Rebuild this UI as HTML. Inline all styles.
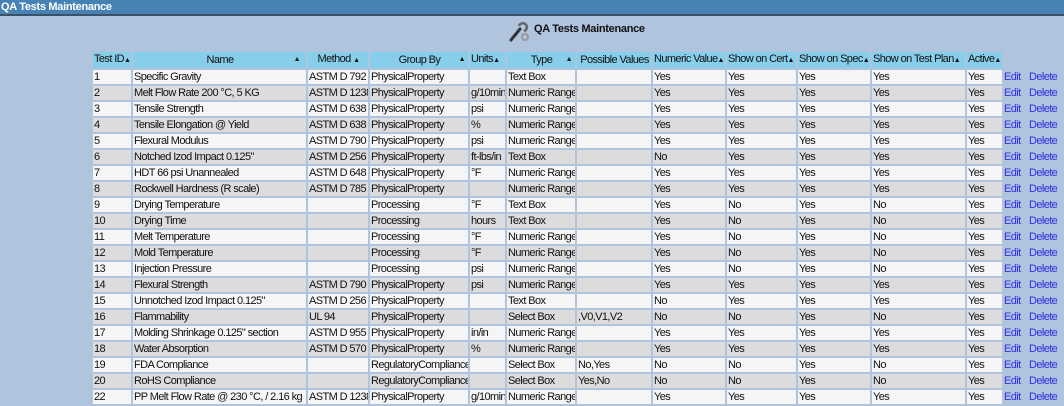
<!DOCTYPE html>
<html><head><meta charset="utf-8"><style>
body{margin:0;width:1064px;height:406px;background:#b0c4de;font-family:"Liberation Sans",Arial,sans-serif;font-size:11px;overflow:hidden;position:relative}
.top{height:14px;background:#4682b4;border-bottom:2px solid #3c5066;color:#fff;font-weight:bold;font-size:11px;line-height:14px;padding-left:1px;letter-spacing:-0.3px}
.title{position:absolute;left:534px;top:22px;font-weight:bold;font-size:11px;color:#111;line-height:14px;letter-spacing:-0.3px}
.title svg{position:absolute;left:-26px;top:-2px}
table{position:absolute;left:91px;top:50px;border-spacing:2px;table-layout:fixed;width:968px}
td,th{padding:0 0 0 1px;height:14px;line-height:14px;white-space:nowrap;overflow:hidden;font-size:11px;color:#111;letter-spacing:-0.6px}
th{background:#87ceeb;font-weight:normal;text-align:center;position:relative}
th.l{text-align:left}
th .a{font-size:7px}
tr.o td{background:#f5f5f5}
tr.e td{background:#dcdcdc}
tr td.n{background:transparent!important;color:#2f2fe8;padding:0;overflow:visible}
</style></head><body>
<div class="top">QA Tests Maintenance</div>
<div class="title"><svg width="22" height="22" viewBox="0 0 22 22"><path d="M3 20 L12 9" stroke="#333" stroke-width="3" stroke-linecap="round"/><path d="M11 6 a4 4 0 1 1 5 5" stroke="#666" stroke-width="2.5" fill="none"/><circle cx="17" cy="17" r="3" fill="none" stroke="#999" stroke-width="2"/></svg>QA Tests Maintenance</div>
<table>
<colgroup><col style="width:38px"><col style="width:173px"><col style="width:60px"><col style="width:98px"><col style="width:35px"><col style="width:68px"><col style="width:74px"><col style="width:72px"><col style="width:69px"><col style="width:72px"><col style="width:93px"><col style="width:35px"><col style="width:23px"><col style="width:28px"></colgroup>
<tr><th class="l">Test ID<span class="a">▲</span></th><th>Name<span class="a" style="position:absolute;right:6px">▲</span></th><th>Method <span class="a">▲</span></th><th>Group By<span class="a" style="position:absolute;right:3px">▲</span></th><th class="l">Units<span class="a">▲</span></th><th>Type<span class="a" style="position:absolute;right:3px">▲</span></th><th>Possible Values</th><th class="l">Numeric Value<span class="a">▲</span></th><th class="l">Show on Cert<span class="a">▲</span></th><th class="l">Show on Spec<span class="a">▲</span></th><th class="l">Show on Test Plan<span class="a">▲</span></th><th class="l">Active<span class="a">▲</span></th><th style="background:transparent"></th><th style="background:transparent"></th></tr>
<tr class="o"><td>1</td><td>Specific Gravity</td><td>ASTM D 792</td><td>PhysicalProperty</td><td></td><td>Text Box</td><td></td><td>Yes</td><td>Yes</td><td>Yes</td><td>Yes</td><td>Yes</td><td class="n">Edit</td><td class="n">Delete</td></tr>
<tr class="e"><td>2</td><td>Melt Flow Rate 200 °C, 5 KG</td><td>ASTM D 1238</td><td>PhysicalProperty</td><td>g/10min</td><td>Numeric Range</td><td></td><td>Yes</td><td>Yes</td><td>Yes</td><td>Yes</td><td>Yes</td><td class="n">Edit</td><td class="n">Delete</td></tr>
<tr class="o"><td>3</td><td>Tensile Strength</td><td>ASTM D 638</td><td>PhysicalProperty</td><td>psi</td><td>Numeric Range</td><td></td><td>Yes</td><td>Yes</td><td>Yes</td><td>Yes</td><td>Yes</td><td class="n">Edit</td><td class="n">Delete</td></tr>
<tr class="e"><td>4</td><td>Tensile Elongation @ Yield</td><td>ASTM D 638</td><td>PhysicalProperty</td><td>%</td><td>Numeric Range</td><td></td><td>Yes</td><td>Yes</td><td>Yes</td><td>Yes</td><td>Yes</td><td class="n">Edit</td><td class="n">Delete</td></tr>
<tr class="o"><td>5</td><td>Flexural Modulus</td><td>ASTM D 790</td><td>PhysicalProperty</td><td>psi</td><td>Numeric Range</td><td></td><td>Yes</td><td>Yes</td><td>Yes</td><td>Yes</td><td>Yes</td><td class="n">Edit</td><td class="n">Delete</td></tr>
<tr class="e"><td>6</td><td>Notched Izod Impact 0.125"</td><td>ASTM D 256</td><td>PhysicalProperty</td><td>ft-lbs/in</td><td>Text Box</td><td></td><td>No</td><td>Yes</td><td>Yes</td><td>Yes</td><td>Yes</td><td class="n">Edit</td><td class="n">Delete</td></tr>
<tr class="o"><td>7</td><td>HDT 66 psi Unannealed</td><td>ASTM D 648</td><td>PhysicalProperty</td><td>°F</td><td>Numeric Range</td><td></td><td>Yes</td><td>Yes</td><td>Yes</td><td>Yes</td><td>Yes</td><td class="n">Edit</td><td class="n">Delete</td></tr>
<tr class="e"><td>8</td><td>Rockwell Hardness (R scale)</td><td>ASTM D 785</td><td>PhysicalProperty</td><td></td><td>Numeric Range</td><td></td><td>Yes</td><td>Yes</td><td>Yes</td><td>Yes</td><td>Yes</td><td class="n">Edit</td><td class="n">Delete</td></tr>
<tr class="o"><td>9</td><td>Drying Temperature</td><td></td><td>Processing</td><td>°F</td><td>Text Box</td><td></td><td>Yes</td><td>No</td><td>Yes</td><td>No</td><td>Yes</td><td class="n">Edit</td><td class="n">Delete</td></tr>
<tr class="e"><td>10</td><td>Drying Time</td><td></td><td>Processing</td><td>hours</td><td>Text Box</td><td></td><td>Yes</td><td>No</td><td>Yes</td><td>No</td><td>Yes</td><td class="n">Edit</td><td class="n">Delete</td></tr>
<tr class="o"><td>11</td><td>Melt Temperature</td><td></td><td>Processing</td><td>°F</td><td>Numeric Range</td><td></td><td>Yes</td><td>No</td><td>Yes</td><td>No</td><td>Yes</td><td class="n">Edit</td><td class="n">Delete</td></tr>
<tr class="e"><td>12</td><td>Mold Temperature</td><td></td><td>Processing</td><td>°F</td><td>Numeric Range</td><td></td><td>Yes</td><td>No</td><td>Yes</td><td>No</td><td>Yes</td><td class="n">Edit</td><td class="n">Delete</td></tr>
<tr class="o"><td>13</td><td>Injection Pressure</td><td></td><td>Processing</td><td>psi</td><td>Numeric Range</td><td></td><td>Yes</td><td>No</td><td>Yes</td><td>No</td><td>Yes</td><td class="n">Edit</td><td class="n">Delete</td></tr>
<tr class="e"><td>14</td><td>Flexural Strength</td><td>ASTM D 790</td><td>PhysicalProperty</td><td>psi</td><td>Numeric Range</td><td></td><td>Yes</td><td>Yes</td><td>Yes</td><td>Yes</td><td>Yes</td><td class="n">Edit</td><td class="n">Delete</td></tr>
<tr class="o"><td>15</td><td>Unnotched Izod Impact 0.125"</td><td>ASTM D 256</td><td>PhysicalProperty</td><td></td><td>Text Box</td><td></td><td>No</td><td>Yes</td><td>Yes</td><td>Yes</td><td>Yes</td><td class="n">Edit</td><td class="n">Delete</td></tr>
<tr class="e"><td>16</td><td>Flammability</td><td>UL 94</td><td>PhysicalProperty</td><td></td><td>Select Box</td><td>,V0,V1,V2</td><td>No</td><td>No</td><td>Yes</td><td>No</td><td>Yes</td><td class="n">Edit</td><td class="n">Delete</td></tr>
<tr class="o"><td>17</td><td>Molding Shrinkage 0.125" section</td><td>ASTM D 955</td><td>PhysicalProperty</td><td>in/in</td><td>Numeric Range</td><td></td><td>Yes</td><td>Yes</td><td>Yes</td><td>Yes</td><td>Yes</td><td class="n">Edit</td><td class="n">Delete</td></tr>
<tr class="e"><td>18</td><td>Water Absorption</td><td>ASTM D 570</td><td>PhysicalProperty</td><td>%</td><td>Numeric Range</td><td></td><td>Yes</td><td>Yes</td><td>Yes</td><td>Yes</td><td>Yes</td><td class="n">Edit</td><td class="n">Delete</td></tr>
<tr class="o"><td>19</td><td>FDA Compliance</td><td></td><td>RegulatoryCompliance</td><td></td><td>Select Box</td><td>No,Yes</td><td>No</td><td>No</td><td>Yes</td><td>No</td><td>Yes</td><td class="n">Edit</td><td class="n">Delete</td></tr>
<tr class="e"><td>20</td><td>RoHS Compliance</td><td></td><td>RegulatoryCompliance</td><td></td><td>Select Box</td><td>Yes,No</td><td>No</td><td>No</td><td>Yes</td><td>No</td><td>Yes</td><td class="n">Edit</td><td class="n">Delete</td></tr>
<tr class="o"><td>22</td><td>PP Melt Flow Rate @ 230 °C, / 2.16 kg</td><td>ASTM D 1238</td><td>PhysicalProperty</td><td>g/10min</td><td>Numeric Range</td><td></td><td>Yes</td><td>Yes</td><td>Yes</td><td>Yes</td><td>Yes</td><td class="n">Edit</td><td class="n">Delete</td></tr>
</table>
</body></html>
